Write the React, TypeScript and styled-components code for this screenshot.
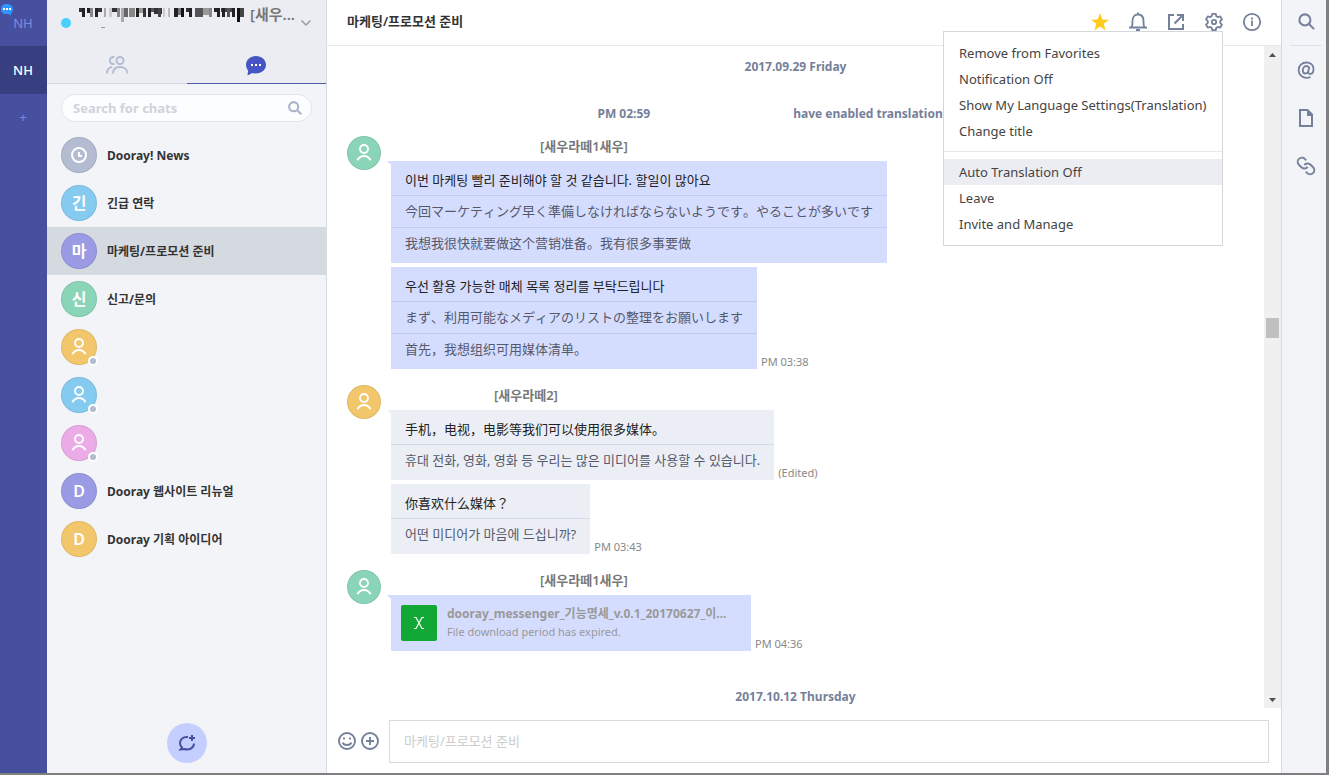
import React from "react";
import styled, { createGlobalStyle } from "styled-components";

const Global = createGlobalStyle`
  *, *::before, *::after { box-sizing: border-box; }
  body { margin: 0; font-family: "Noto Sans", "Noto Sans CJK KR", "Noto Sans CJK SC", sans-serif; font-size: 13px; line-height: 18px; color: #333; background: #fff; }
  h1, h2, p, ul, ol { margin: 0; padding: 0; list-style: none; }
  button { border: 0; padding: 0; background: none; font: inherit; color: inherit; cursor: pointer; }
`;

const Window = styled.div`
  display: flex;
  height: 100vh;
  border: solid #808080;
  border-width: 0 3px 2px 0;
  background: #fff;
`;

/* Organisation rail */
const Rail = styled.nav`
  flex: none;
  display: flex;
  flex-direction: column;
  width: 47px;
  background: #46509f;
`;
const RailButton = styled.button<{ $active?: boolean }>`
  position: relative;
  height: ${(p) => (p.$active ? 48 : 46)}px;
  padding: 0 1px 1px 0;
  font-size: 13px;
  font-weight: ${(p) => (p.$active ? 500 : 400)};
  color: ${(p) => (p.$active ? "#fff" : "#8289dd")};
  background: ${(p) => (p.$active ? "#373f80" : "transparent")};
`;
const RailBadge = styled.svg`
  position: absolute;
  left: 0;
  top: 3px;
`;

/* Sidebar */
const Sidebar = styled.aside`
  flex: none;
  display: flex;
  flex-direction: column;
  width: 280px;
  border-right: 1px solid #d5d9e0;
  background: #f3f4f8;
`;
const SidebarTop = styled.header`
  background: #ecedf3;
`;
const Profile = styled.button`
  display: flex;
  align-items: center;
  width: 100%;
  height: 46px;
  padding: 0 14px;
`;
const Presence = styled.span`
  width: 10px;
  height: 10px;
  margin-right: 8px;
  border-radius: 50%;
  background: #48d0ff;
`;
const ProfileName = styled.span`
  display: flex;
  flex: 1;
  gap: 4px;
  height: 46px;
  font-size: 15px;
  font-weight: 600;
  line-height: 28px;
  color: #777;
`;
const Tabs = styled.div`
  display: flex;
`;
const Tab = styled.button<{ $active?: boolean }>`
  display: flex;
  flex: 1;
  align-items: center;
  justify-content: center;
  height: 38px;
  border-bottom: 1px solid ${(p) => (p.$active ? "#4c5ab0" : "#d5d9e0")};
`;
const SearchBox = styled.label`
  display: flex;
  align-items: center;
  height: 28px;
  margin: 10px 14px 9px;
  padding: 0 9px 0 11px;
  border: 1px solid #e3e5ec;
  border-radius: 14px;
  background: #fcfdff;
`;
const SearchInput = styled.input`
  flex: 1;
  min-width: 0;
  padding: 0;
  border: 0;
  outline: 0;
  background: none;
  font: inherit;
  font-weight: 700;
  &::placeholder { color: #cfd3da; opacity: 1; }
`;
const ChatList = styled.ul`
  flex: 1;
`;
const ChatRow = styled.button<{ $active?: boolean }>`
  display: flex;
  align-items: center;
  gap: 10px;
  width: 100%;
  height: 48px;
  padding: 0 14px;
  text-align: left;
  font-size: 12px;
  font-weight: 700;
  background: ${(p) => (p.$active ? "#d5d9e0" : "transparent")};
`;
const ChatName = styled.span`
  padding-top: 2px;
`;
const Avatar = styled.span<{ $color: string; $size?: number }>`
  position: relative;
  flex: none;
  display: flex;
  align-items: center;
  justify-content: center;
  width: ${(p) => p.$size ?? 36}px;
  height: ${(p) => p.$size ?? 36}px;
  border: 1px solid rgba(0, 0, 0, 0.08);
  border-radius: 50%;
  font-size: 16px;
  font-weight: 600;
  color: #fff;
  background: ${(p) => p.$color};
`;
const StatusDot = styled.span`
  position: absolute;
  right: -2px;
  bottom: -2px;
  width: 10px;
  height: 10px;
  border: 2px solid #fff;
  border-radius: 50%;
  background: #b3bbd0;
`;
const SidebarFoot = styled.footer`
  display: flex;
  justify-content: center;
  padding-bottom: 10px;
`;
const NewChat = styled.button`
  display: flex;
  align-items: center;
  justify-content: center;
  width: 40px;
  height: 40px;
  border-radius: 50%;
  background: #c5cfff;
`;

/* Conversation */
const Main = styled.main`
  flex: 1;
  display: flex;
  flex-direction: column;
  min-width: 0;
`;
const MainHeader = styled.header`
  position: relative;
  flex: none;
  display: flex;
  align-items: center;
  justify-content: space-between;
  height: 46px;
  padding: 0 19px 2px 20px;
  border-bottom: 1px solid #e7e8ec;
`;
const Title = styled.h1`
  padding-bottom: 1px;
  font-size: 13px;
  font-weight: 600;
`;
const Toolbar = styled.div`
  display: flex;
  gap: 18px;
`;
const IconButton = styled.button`
  display: flex;
  width: 20px;
  height: 20px;
`;
const Menu = styled.div`
  position: absolute;
  z-index: 1;
  top: 31px;
  right: 58px;
  width: 280px;
  padding: 8px 0;
  border: 1px solid #d5d7dc;
  background: #fff;
`;
const MenuItem = styled.button<{ $active?: boolean }>`
  display: block;
  width: 100%;
  height: 26px;
  padding-left: 15px;
  text-align: left;
  color: #444;
  background: ${(p) => (p.$active ? "#ecedf3" : "transparent")};
`;
const MenuRule = styled.hr`
  margin: 7px 0;
  border: 0;
  border-top: 1px solid #e7e8ec;
`;
const Viewport = styled.div`
  flex: 1;
  display: flex;
  min-height: 0;
`;
const Log = styled.div`
  flex: 1;
  min-width: 0;
  overflow: hidden;
  padding: 12px 20px 0;
`;
const Notice = styled.p`
  text-align: center;
  font-size: 12px;
  font-weight: 700;
  color: #75809a;
  article + & { margin-top: 33px; }
`;
const SystemLine = styled.div`
  display: flex;
  justify-content: center;
  gap: 143px;
  margin: 29px 0 13px;
  font-size: 12px;
  font-weight: 700;
  color: #75809a;
`;
const Group = styled.article`
  display: flex;
  gap: 10px;
  margin-bottom: 12px;
`;
const GroupBody = styled.div`
  flex: 1;
`;
const Sender = styled.h2<{ $indent: number }>`
  height: 25px;
  padding: 1px 0 0 ${(p) => p.$indent}px;
  font-size: 13px;
  font-weight: 600;
  color: #777;
`;
const MessageRow = styled.div`
  display: flex;
  align-items: flex-end;
  gap: 4px;
  margin-bottom: 4px;
`;
const Bubble = styled.div<{ $mine?: boolean; $tail?: boolean }>`
  position: relative;
  color: #222;
  background: ${(p) => (p.$mine ? "#d5ddff" : "#ebeff5")};
  &::before {
    content: "";
    position: absolute;
    display: ${(p) => (p.$tail ? "block" : "none")};
    top: 0;
    left: -4px;
    border-top: 4px solid ${(p) => (p.$mine ? "#d5ddff" : "#ebeff5")};
    border-left: 4px solid transparent;
  }
`;
const Line = styled.p<{ $font: string }>`
  height: 32px;
  padding: 6px 14px 0;
  font-family: "Noto Sans", "Noto Sans CJK ${(p) => p.$font}", sans-serif;
  font-kerning: ${(p) => (p.$font === "KR" ? "auto" : "none")};
  color: #55596b;
  border-top: 1px solid rgba(90, 100, 150, 0.16);
  &:first-child { height: 34px; padding-top: 10px; color: #222; border-top: 0; }
  &:last-child { height: 36px; }
`;
const Meta = styled.span`
  font-size: 11px;
  line-height: 14px;
  color: #888;
`;
const FileCard = styled.div`
  display: flex;
  gap: 10px;
  width: 360px;
  padding: 10px;
`;
const FileIcon = styled.span`
  display: flex;
  align-items: center;
  justify-content: center;
  width: 36px;
  height: 36px;
  border-radius: 2px;
  background: #12a835;
`;
const FileName = styled.a`
  display: block;
  font-size: 12px;
  font-weight: 700;
  text-decoration: none;
  color: #999;
`;
const FileNote = styled.p`
  font-size: 11px;
  color: #999;
`;

/* Scroll bar */
const ScrollBar = styled.div`
  display: flex;
  flex-direction: column;
  align-items: center;
  width: 17px;
  background: #f0f0f0;
`;
const ScrollArrow = styled.button`
  display: flex;
  align-items: center;
  justify-content: center;
  width: 17px;
  height: 17px;
`;
const Thumb = styled.div`
  width: 13px;
  height: 20px;
  background: #c0c0c0;
`;
const Track = styled.div<{ $share: number }>`
  flex: ${(p) => p.$share};
`;

const Composer = styled.form`
  flex: none;
  display: flex;
  align-items: center;
  gap: 9px;
  padding: 12px 12px 10px 10px;
`;
const ComposerActions = styled.div`
  display: flex;
  gap: 3px;
  padding-bottom: 1px;
`;
const ComposerInput = styled.input`
  flex: 1;
  min-width: 0;
  height: 43px;
  padding: 0 14px 2px;
  border: 1px solid #d5d9e0;
  font: inherit;
  &::placeholder { color: #ccc; opacity: 1; }
`;

const Tools = styled.aside`
  flex: none;
  display: flex;
  flex-direction: column;
  align-items: center;
  width: 45px;
  padding-left: 4px;
  border-left: 1px solid #d5d9e0;
  background: #f3f4f8;
`;
const ToolButton = styled.button<{ $ruled?: boolean }>`
  display: flex;
  align-items: center;
  justify-content: center;
  width: 32px;
  height: ${(p) => (p.$ruled ? 46 : 48)}px;
  padding-bottom: ${(p) => (p.$ruled ? 2 : 0)}px;
  border-bottom: ${(p) => (p.$ruled ? "1px solid #dfe1e8" : "0")};
`;

const GRAY = "#75809a";

const Person = () => (
  <svg width="20" height="20" viewBox="0 0 20 20" fill="none" stroke="#fff" strokeWidth="1.900">
    <circle cx="10" cy="6" r="4" />
    <path d="M3.400 17.200C5 14.200 7.500 13 10 13s5 1.200 6.600 4.200" />
  </svg>
);
const Clock = () => (
  <svg width="18" height="18" viewBox="0 0 18 18" fill="none" stroke="#fff" strokeWidth="2">
    <circle cx="9" cy="9" r="7" />
    <path d="M9 6v4h3" />
  </svg>
);
const Magnifier = ({ size = 17, color = GRAY, weight = 1.9 }: { size?: number; color?: string; weight?: number }) => (
  <svg width={size} height={size} viewBox="0 0 16 16" fill="none" stroke={color} strokeWidth={weight}>
    <circle cx="6.500" cy="6.500" r="5.200" />
    <path d="M10.300 10.300 15.200 15.200" />
  </svg>
);

type Chat = { name: string; color: string; mark?: string; person?: boolean; active?: boolean };
const chats: Chat[] = [
  { name: "Dooray! News", color: "#b3bcd0" },
  { name: "긴급 연락", color: "#85cbf0", mark: "긴" },
  { name: "마케팅/프로모션 준비", color: "#9a9be4", mark: "마", active: true },
  { name: "신고/문의", color: "#8ad5b8", mark: "신" },
  { name: "", color: "#f2c76c", person: true },
  { name: "", color: "#85cbf0", person: true },
  { name: "", color: "#ebabe6", person: true },
  { name: "Dooray 웹사이트 리뉴얼", color: "#9a9be4", mark: "D" },
  { name: "Dooray 기획 아이디어", color: "#f2c76c", mark: "D" },
];

type Message = { lines: [string, string][]; meta?: string };
type Thread = { sender: string; indent: number; color: string; mine?: boolean; messages: Message[] };
const threads: Thread[] = [
  {
    sender: "[새우라떼1새우]",
    indent: 149,
    color: "#8ad5b8",
    mine: true,
    messages: [
      {
        lines: [
          ["이번 마케팅 빨리 준비해야 할 것 같습니다. 할일이 많아요", "KR"],
          ["今回マーケティング早く準備しなければならないようです。やることが多いです", "JP"],
          ["我想我很快就要做这个营销准备。我有很多事要做", "SC"],
        ],
      },
      {
        lines: [
          ["우선 활용 가능한 매체 목록 정리를 부탁드립니다", "KR"],
          ["まず、利用可能なメディアのリストの整理をお願いします", "JP"],
          ["首先，我想组织可用媒体清单。", "SC"],
        ],
        meta: "PM 03:38",
      },
    ],
  },
  {
    sender: "[새우라떼2]",
    indent: 103,
    color: "#f2c76c",
    messages: [
      {
        lines: [
          ["手机，电视，电影等我们可以使用很多媒体。", "SC"],
          ["휴대 전화, 영화, 영화 등 우리는 많은 미디어를 사용할 수 있습니다.", "KR"],
        ],
        meta: "(Edited)",
      },
      {
        lines: [
          ["你喜欢什么媒体？", "JP"],
          ["어떤 미디어가 마음에 드십니까?", "KR"],
        ],
        meta: "PM 03:43",
      },
    ],
  },
];

/* Censored user name: x, width, height and shade of each block */
const blocks: [number, number, number, string][] = [
  [0, 3, 4, "#333"], [3, 3, 9, "#222"], [8, 3, 5, "#222"], [11, 3, 9, "#888"], [16, 3, 9, "#222"], [19, 4, 4, "#333"],
  [25, 2, 9, "#aaa"], [30, 3, 9, "#ccc"], [33, 8, 4, "#333"], [38, 3, 9, "#888"], [42, 3, 14, "#aaa"], [45, 4, 9, "#666"],
  [50, 6, 9, "#888"], [57, 3, 9, "#222"], [60, 6, 5, "#999"], [64, 3, 9, "#333"], [69, 3, 9, "#222"], [72, 6, 4, "#555"],
  [75, 8, 6, "#333"], [79, 3, 9, "#444"], [84, 2, 9, "#ccc"], [89, 2, 9, "#bbb"], [95, 4, 9, "#222"], [99, 3, 7, "#777"], [102, 3, 9, "#111"],
  [107, 5, 4, "#333"], [110, 3, 9, "#222"], [116, 8, 9, "#555"], [124, 6, 7, "#999"], [130, 3, 9, "#888"], [135, 3, 4, "#222"],
  [138, 3, 9, "#222"], [142, 13, 4, "#444"], [143, 3, 9, "#222"], [148, 3, 9, "#555"], [153, 3, 9, "#222"], [158, 3, 14, "#111"], [161, 4, 9, "#444"],
];

export default function App() {
  return (
    <>
      <Global />
      <Window>
        <Rail aria-label="Organizations">
          <RailButton>
            <RailBadge width="13" height="13" viewBox="0 0 13 13">
              <path fill="#2f95ff" d="M6.500 1C10 1 13 3 13 6c0 2-1 3.500-2 4v2.500L8.500 11H6.500C3 11 1 9 1 6s2-5 5.500-5z" />
              <path fill="#fff" d="M3 5h2v2H3zM6 5h2v2H6zM9 5h2v2H9z" />
            </RailBadge>
            NH
          </RailButton>
          <RailButton $active>NH</RailButton>
          <RailButton aria-label="Add organization">+</RailButton>
        </Rail>

        <Sidebar>
          <SidebarTop>
            <Profile aria-label="Profile">
              <Presence />
              <ProfileName>
                <svg width="167" height="28" viewBox="0 0 167 28" aria-hidden="true">
                  {blocks.map(([x, w, h, fill], i) => (
                    <rect key={i} x={x} y="8" width={w} height={h} fill={fill} />
                  ))}
                  <path fill="#999" d="M22 27h4v1h-4z" />
                </svg>
                [새우...
              </ProfileName>
              <svg width="12" height="8" viewBox="0 0 12 8" fill="none" stroke="#999ca8" strokeWidth="1.500">
                <path d="M1.500 1.500 6 6l4.500-4.500" />
              </svg>
            </Profile>
            <Tabs>
              <Tab aria-label="Members">
                <svg width="24" height="20" viewBox="0 0 24 20" fill="none" stroke="#b3bcd0" strokeWidth="1.900">
                  <circle cx="15" cy="5.500" r="3.500" />
                  <path d="M9.500 2.200a3.500 3.500 0 1 0 0 6.600M8 18.500c0-4.300 3-6.500 7-6.500s7.500 2.200 7.500 6.500M2 18.500c0-3.500 1.500-5.800 5-6.600" />
                </svg>
              </Tab>
              <Tab $active aria-label="Chats">
                <svg width="22" height="22" viewBox="0 0 22 22">
                  <path fill="#4655c4" d="M11 2c5.500 0 10 3.500 10 8.800 0 5-4.500 8.700-10 8.700-1.500 0-2.500-.2-3.500-.6L2.500 21.500l.6-5C1.800 15 1 13 1 10.800 1 5.500 5.500 2 11 2z" />
                  <path fill="#fff" d="M6 10h2v2H6zM10 10h2v2h-2zM14 10h2v2h-2z" />
                </svg>
              </Tab>
            </Tabs>
          </SidebarTop>
          <SearchBox>
            <SearchInput placeholder="Search for chats" aria-label="Search for chats" />
            <Magnifier size={14} color="#aab4ca" weight={2.4} />
          </SearchBox>
          <ChatList>
            {chats.map((c, i) => (
              <li key={i}>
                <ChatRow $active={c.active} aria-label={c.name || "Direct chat"}>
                  <Avatar $color={c.color}>
                    {c.mark ?? (c.person ? <Person /> : <Clock />)}
                    {c.person && <StatusDot />}
                  </Avatar>
                  <ChatName>{c.name}</ChatName>
                </ChatRow>
              </li>
            ))}
          </ChatList>
          <SidebarFoot>
            <NewChat aria-label="New chat">
              <svg width="20" height="20" viewBox="0 0 20 20" fill="none" stroke="#46509f" strokeWidth="2">
                <path d="M11 4C6 3.500 3 6.500 3 10c0 2 .8 3.500 2 4.500L3.500 16.500l4-.5C12 17.500 17 15 17 10.500M12 5h6M15 2v6" />
              </svg>
            </NewChat>
          </SidebarFoot>
        </Sidebar>

        <Main>
          <MainHeader>
            <Title>마케팅/프로모션 준비</Title>
            <Toolbar>
              <IconButton aria-label="Favorite">
                <svg width="20" height="20" viewBox="0 0 20 20">
                  <path fill="#ffcb1f" d="m10 1 2.400 6.400 6.600.3-5.200 4.100L15.600 18.500 10 14.600l-5.600 3.900 1.800-6.700L1 7.700l6.600-.3z" />
                </svg>
              </IconButton>
              <IconButton aria-label="Notifications">
                <svg width="20" height="20" viewBox="0 0 20 20" fill="none" stroke={GRAY} strokeWidth="1.800">
                  <path d="M1 15.500h18M3.500 15.500C4.500 14 4.500 12 4.500 9c0-4 2-6.500 5.500-6.500s5.500 2.500 5.500 6.500c0 3 0 5 1 6.500M10 .5v2M8 18h4" />
                </svg>
              </IconButton>
              <IconButton aria-label="Open in new window">
                <svg width="20" height="20" viewBox="0 0 20 20" fill="none" stroke={GRAY} strokeWidth="2">
                  <path d="M8 3H3v14h14v-5M11 3h6v6M17 3l-8.500 8.500" />
                </svg>
              </IconButton>
              <IconButton aria-label="Settings" aria-expanded="true">
                <svg width="20" height="20" viewBox="0 0 20 20" fill="none" stroke={GRAY} strokeWidth="1.800">
                  <path strokeLinejoin="round" d="M8.300 1.800h3.400l.6 2.400 1.500.9 2.400-.7 1.700 2.900-1.700 1.800v1.800l1.700 1.800-1.700 2.900-2.400-.7-1.500.9-.6 2.400H8.300l-.6-2.400-1.500-.9-2.400.7-1.700-2.900 1.700-1.800V9.100L2.100 7.300l1.700-2.900 2.400.7 1.500-.9z" />
                  <circle cx="10" cy="10" r="2.200" />
                </svg>
              </IconButton>
              <IconButton aria-label="Information">
                <svg width="20" height="20" viewBox="0 0 20 20" fill="none" stroke={GRAY} strokeWidth="1.800">
                  <circle cx="10" cy="10" r="8.200" />
                  <path d="M10 8.500V14M10 5.500v2" />
                </svg>
              </IconButton>
            </Toolbar>
            <Menu role="menu">
              <MenuItem role="menuitem">Remove from Favorites</MenuItem>
              <MenuItem role="menuitem">Notification Off</MenuItem>
              <MenuItem role="menuitem">Show My Language Settings(Translation)</MenuItem>
              <MenuItem role="menuitem">Change title</MenuItem>
              <MenuRule />
              <MenuItem role="menuitem" $active>Auto Translation Off</MenuItem>
              <MenuItem role="menuitem">Leave</MenuItem>
              <MenuItem role="menuitem">Invite and Manage</MenuItem>
            </Menu>
          </MainHeader>

          <Viewport>
            <Log>
              <Notice>2017.09.29 Friday</Notice>
              <SystemLine>
                <span>PM 02:59</span>
                <span>have enabled translation feature.</span>
              </SystemLine>
              {threads.map((t) => (
                <Group key={t.sender}>
                  <Avatar $color={t.color} $size={34}><Person /></Avatar>
                  <GroupBody>
                    <Sender $indent={t.indent}>{t.sender}</Sender>
                    {t.messages.map((m, i) => (
                      <MessageRow key={i}>
                        <Bubble $mine={t.mine} $tail={i === 0}>
                          {m.lines.map(([text, font]) => (
                            <Line key={text} $font={font}>{text}</Line>
                          ))}
                        </Bubble>
                        {m.meta && <Meta>{m.meta}</Meta>}
                      </MessageRow>
                    ))}
                  </GroupBody>
                </Group>
              ))}
              <Group>
                <Avatar $color="#8ad5b8" $size={34}><Person /></Avatar>
                <GroupBody>
                  <Sender $indent={149}>[새우라떼1새우]</Sender>
                  <MessageRow>
                    <Bubble $mine $tail>
                      <FileCard>
                        <FileIcon>
                          <svg width="12" height="14" viewBox="0 0 12 14" fill="none" stroke="#fff" strokeWidth="1.200">
                            <path d="M1 1.500h2l6 11h2M11 1.500H9l-6 11H1" />
                          </svg>
                        </FileIcon>
                        <div>
                          <FileName href="#">dooray_messenger_기능명세_v.0.1_20170627_이...</FileName>
                          <FileNote>File download period has expired.</FileNote>
                        </div>
                      </FileCard>
                    </Bubble>
                    <Meta>PM 04:36</Meta>
                  </MessageRow>
                </GroupBody>
              </Group>
              <Notice>2017.10.12 Thursday</Notice>
            </Log>
            <ScrollBar>
              <ScrollArrow aria-label="Scroll up">
                <svg width="7" height="4" viewBox="0 0 7 4"><path fill="#505050" d="M0 4 3.500 0 7 4z" /></svg>
              </ScrollArrow>
              <Track $share={255} />
              <Thumb />
              <Track $share={353} />
              <ScrollArrow aria-label="Scroll down">
                <svg width="7" height="4" viewBox="0 0 7 4"><path fill="#505050" d="M0 0 3.500 4 7 0z" /></svg>
              </ScrollArrow>
            </ScrollBar>
          </Viewport>

          <Composer>
            <ComposerActions>
              <IconButton type="button" aria-label="Emoji">
                <svg width="20" height="20" viewBox="0 0 20 20" fill="none" stroke={GRAY} strokeWidth="1.900">
                  <circle cx="10" cy="10" r="8" />
                  <path d="M5.800 11.500c.7 3.300 7.700 3.300 8.400 0M7 6.500v2M13 6.500v2" />
                </svg>
              </IconButton>
              <IconButton type="button" aria-label="Attach">
                <svg width="20" height="20" viewBox="0 0 20 20" fill="none" stroke={GRAY} strokeWidth="1.900">
                  <circle cx="10" cy="10" r="8" />
                  <path d="M6 10h8M10 6v8" />
                </svg>
              </IconButton>
            </ComposerActions>
            <ComposerInput placeholder="마케팅/프로모션 준비" aria-label="Message" />
          </Composer>
        </Main>

        <Tools>
          <ToolButton $ruled aria-label="Search"><Magnifier /></ToolButton>
          <ToolButton aria-label="Mentions">
            <svg width="18" height="18" viewBox="0 0 18 18" fill="none" stroke={GRAY} strokeWidth="1.800">
              <path d="M13.500 16c-5 2.200-11.500-.5-11.800-6.500C1.500 4.500 5 1.500 9.500 1.500c4 0 7 2.500 7 6.500 0 3-1.500 5-3.500 5-1.500 0-2-1-1.700-2.500L12.300 5.500M11.800 8c.3-2-1-3-2.500-3-2 0-3.500 2-3.500 4.500 0 2 1 3 2.500 3 2 0 3.200-2 3.500-4.500" />
            </svg>
          </ToolButton>
          <ToolButton aria-label="Files">
            <svg width="16" height="18" viewBox="0 0 16 18" fill="none" stroke={GRAY} strokeWidth="2">
              <path d="M2 1h7.500L14 5.500V17H2z" />
              <path fill={GRAY} stroke="none" d="M9 1h1l5 5v1H9z" />
            </svg>
          </ToolButton>
          <ToolButton aria-label="Links">
            <svg width="20" height="20" viewBox="0 0 24 24" fill="none" stroke={GRAY} strokeWidth="2.300">
              <g transform="matrix(-1 0 0 1 24 0)">
                <path d="M10 13a5 5 0 0 0 7.540.540l3-3a5 5 0 0 0-7.070-7.070l-1.720 1.710" />
                <path d="M14 11a5 5 0 0 0-7.540-.540l-3 3a5 5 0 0 0 7.070 7.070l1.710-1.710" />
              </g>
            </svg>
          </ToolButton>
        </Tools>
      </Window>
    </>
  );
}
